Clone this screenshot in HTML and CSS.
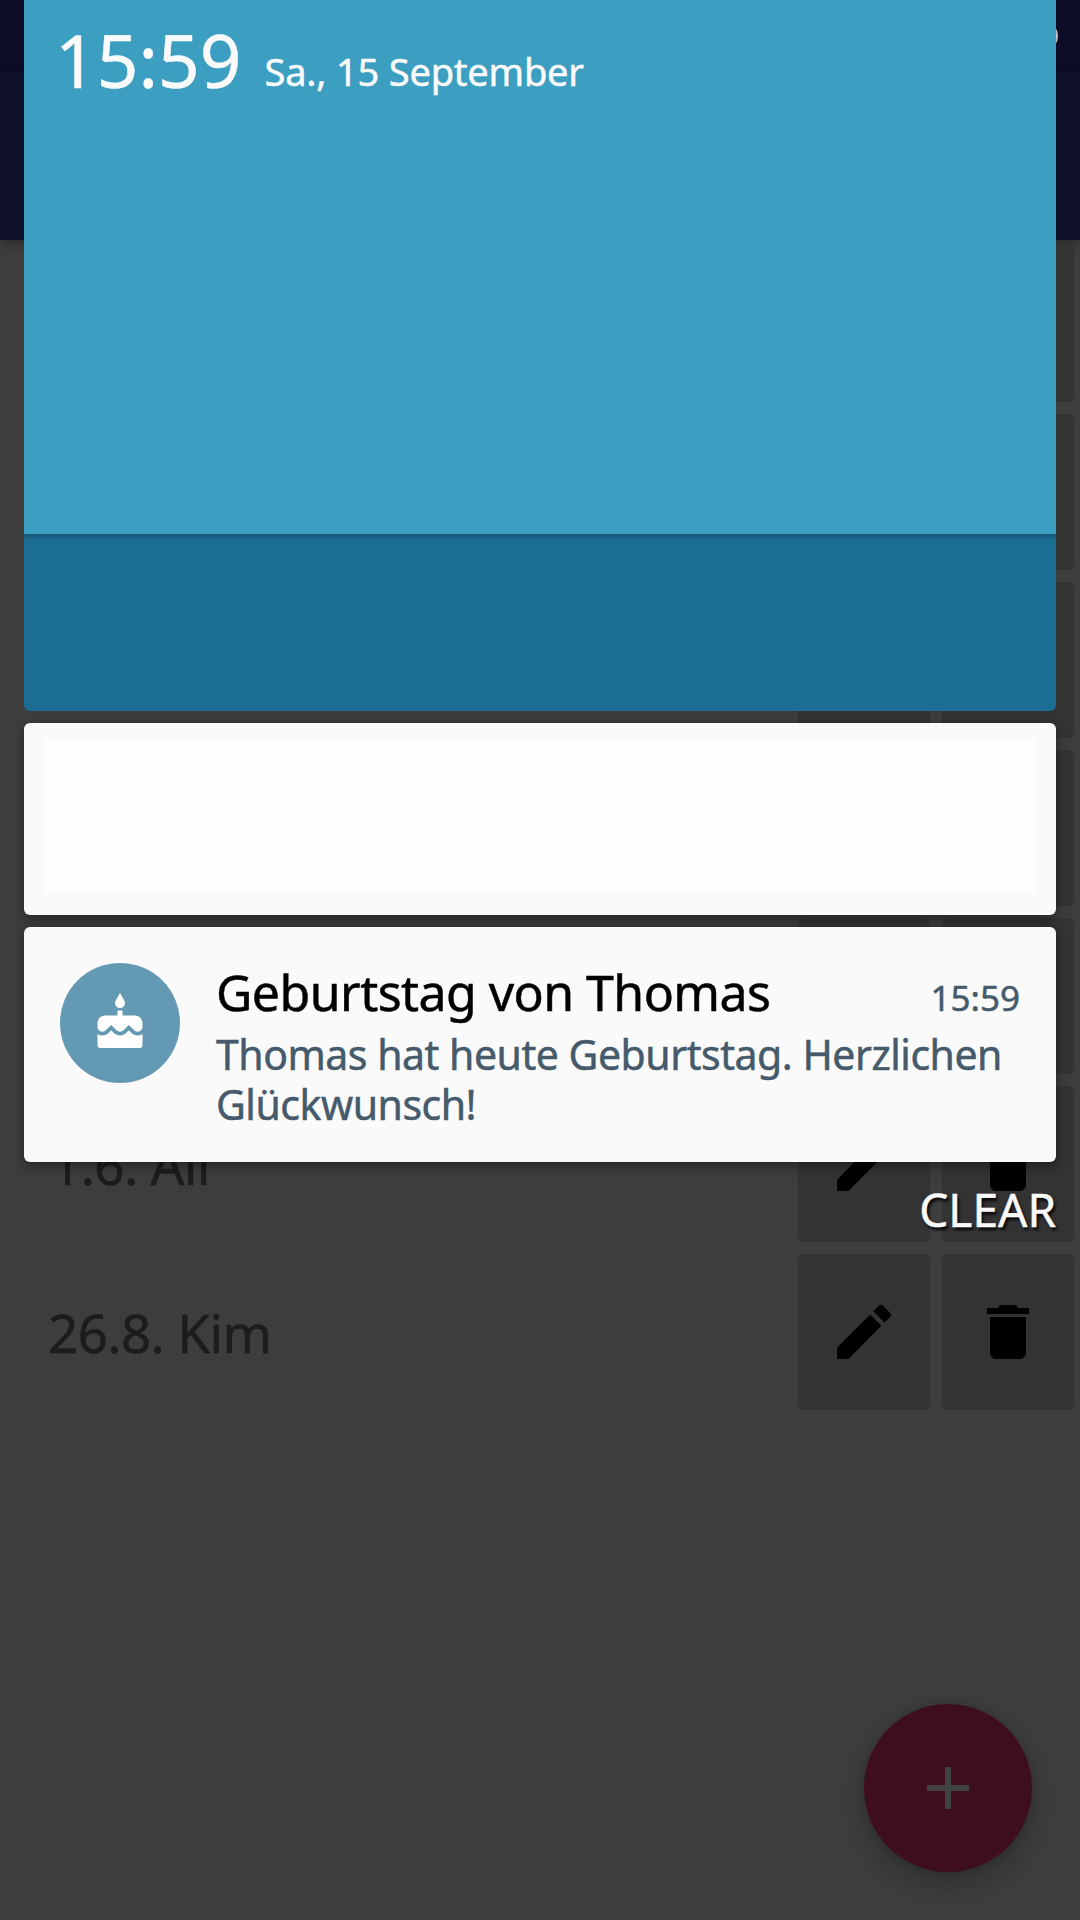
FILE: index.html
```html
<!DOCTYPE html>
<html lang="de">
<head>
<meta charset="utf-8">
<title>Geburtstage</title>
<link rel="stylesheet" href="styles.css">
</head>
<body>
<div class="screen">
  <div class="app">
    <div class="status-bar"><span class="status-dot"></span></div>
    <div class="app-bar"></div>
    <div class="list">
      <div class="row"><span class="name"></span><span class="btn"></span><span class="btn"></span></div>
      <div class="row"><span class="name"></span><span class="btn"></span><span class="btn"></span></div>
      <div class="row"><span class="name"></span><span class="btn"></span><span class="btn"></span></div>
      <div class="row"><span class="name"></span><span class="btn"></span><span class="btn"></span></div>
      <div class="row"><span class="name"></span><span class="btn"></span><span class="btn"></span></div>
      <div class="row">
        <span class="name name-short">1.6. Ali</span>
        <span class="btn"><svg class="icon" viewBox="0 0 24 24"><path d="M3 17.25V21h3.75L17.81 9.94l-3.75-3.75L3 17.25zM20.71 7.04a1 1 0 0 0 0-1.41l-2.34-2.34a1 1 0 0 0-1.41 0l-1.83 1.83 3.75 3.75 1.83-1.83z"/></svg></span>
        <span class="btn"><svg class="icon" viewBox="0 0 24 24"><path d="M6 19c0 1.1.9 2 2 2h8c1.1 0 2-.9 2-2V7H6v12zM19 4h-3.5l-1-1h-5l-1 1H5v2h14V4z"/></svg></span>
      </div>
      <div class="row">
        <span class="name">26.8. Kim</span>
        <span class="btn"><svg class="icon" viewBox="0 0 24 24"><path d="M3 17.25V21h3.75L17.81 9.94l-3.75-3.75L3 17.25zM20.71 7.04a1 1 0 0 0 0-1.41l-2.34-2.34a1 1 0 0 0-1.41 0l-1.83 1.83 3.75 3.75 1.83-1.83z"/></svg></span>
        <span class="btn"><svg class="icon" viewBox="0 0 24 24"><path d="M6 19c0 1.1.9 2 2 2h8c1.1 0 2-.9 2-2V7H6v12zM19 4h-3.5l-1-1h-5l-1 1H5v2h14V4z"/></svg></span>
      </div>
    </div>
    <div class="fab"><svg class="icon" viewBox="0 0 24 24"><path d="M19 13h-6v6h-2v-6H5v-2h6V5h2v6h6v2z"/></svg></div>
  </div>

  <div class="shade">
    <div class="header">
      <div class="header-top"><span class="clock">15:59</span><span class="date">Sa., 15 September</span></div>
      <div class="header-bottom"></div>
    </div>
    <div class="card card-blank"><div class="blank"></div></div>
    <div class="card card-note">
      <div class="badge"><svg viewBox="0 0 24 24"><path d="M12 6c1.11 0 2-.9 2-2 0-.38-.1-.73-.29-1.03L12 0l-1.71 2.97c-.19.3-.29.65-.29 1.03 0 1.1.9 2 2 2zm4.6 9.99l-1.07-1.07-1.08 1.07c-1.3 1.3-3.58 1.31-4.89 0l-1.07-1.07-1.09 1.07C6.75 16.64 5.88 17 4.96 17c-.73 0-1.4-.23-1.96-.61V21c0 .55.45 1 1 1h16c.55 0 1-.45 1-1v-4.61c-.56.38-1.23.61-1.96.61-.92 0-1.79-.36-2.44-1.01zM18 9h-5V7h-2v2H6c-1.66 0-3 1.34-3 3v1.54c0 1.08.88 1.96 1.96 1.96.52 0 1.02-.2 1.38-.57l2.14-2.13 2.13 2.13c.74.74 2.03.74 2.77 0l2.14-2.13 2.13 2.13c.37.37.86.57 1.38.57 1.08 0 1.96-.88 1.96-1.96V12C21 10.34 19.66 9 18 9z"/></svg></div>
      <div class="note-text">
        <div class="note-head"><span class="title">Geburtstag von Thomas</span><span class="time">15:59</span></div>
        <div class="body">Thomas hat heute Geburtstag. Herzlichen<br>Glückwunsch!</div>
      </div>
    </div>
    <div class="clear">CLEAR</div>
  </div>
</div>
</body>
</html>
```
FILE: styles.css
```css
* { box-sizing: border-box; }
body { margin: 0; font-family: "Noto Sans", sans-serif; line-height: 1; white-space: nowrap; -webkit-text-stroke: .5px; }
.screen { position: relative; width: 1080px; height: 1920px; overflow: hidden; background: #3d3d3d; }

.status-bar { height: 72px; background: #0d0d28; display: flex; justify-content: flex-end; padding: 21px 22px 0 0; }
.status-dot { width: 30px; height: 30px; border-radius: 50%; background: #c4bcc0; }
.app-bar { height: 168px; background: #10122c; box-shadow: 0 4px 10px rgba(0, 0, 0, .3); }
.list { display: flex; flex-direction: column; gap: 12px; padding: 6px 6px 0 48px; }
.row { display: flex; gap: 12px; height: 156px; }
.name { flex: 1; font-size: 53px; letter-spacing: -.65px; color: #1c1c1c; padding-top: 52px; }
.name-short { padding-left: 3px; }
.btn { width: 132px; background: #333; border-radius: 6px; display: flex; align-items: center; justify-content: center; }
.icon { width: 72px; height: 72px; display: block; }
.fab { position: absolute; right: 48px; bottom: 48px; width: 168px; height: 168px; border-radius: 50%; background: #3f0e1e; display: flex; align-items: center; justify-content: center; box-shadow: 0 12px 24px rgba(0, 0, 0, .22), 0 0 10px rgba(0, 0, 0, .12); }
.fab .icon { fill: #414141; }

.shade { position: absolute; inset: 0; padding: 0 24px; display: flex; flex-direction: column; gap: 12px; }
.header { height: 711px; border-radius: 0 0 6px 6px; overflow: hidden; display: flex; flex-direction: column; }
.header-top { height: 534px; background: #3c9fc1; color: #fafafa; display: flex; align-items: flex-start; padding: 23px 31px 0; gap: 23px; }
.header-bottom { flex: 1; background: linear-gradient(rgba(0, 0, 0, .2), rgba(0, 0, 0, 0) 6px), #1b6d93; }
.clock { font-size: 73px; }
.date { font-size: 38px; letter-spacing: -.2px; margin-top: 29px; }
.card { background: #fafafa; border-radius: 6px; box-shadow: 0 4px 12px rgba(0, 0, 0, .4); }
.card-blank { height: 192px; padding: 15px 19px 21px 20px; }
.blank { height: 100%; background: #fdfdfd; }
.card-note { height: 235px; padding: 36px 36px 0; display: flex; gap: 36px; }
.badge { flex: none; width: 120px; height: 120px; border-radius: 50%; background: #6499b3; display: flex; align-items: center; justify-content: center; }
.badge svg { width: 60px; height: 60px; fill: #fff; }
.note-text { flex: 1; color: #455a6b; padding-top: 4px; }
.note-head { display: flex; justify-content: space-between; align-items: baseline; }
.title { font-size: 50px; letter-spacing: -.55px; color: #000; }
.time { font-size: 35px; }
.body { font-size: 41px; line-height: 50px; letter-spacing: -.48px; margin-top: 12px; }
.clear { text-align: right; font-size: 46px; color: #fafafa; text-shadow: 2px 3px 3px rgba(0, 0, 0, .9); padding-top: 12px; }
```
